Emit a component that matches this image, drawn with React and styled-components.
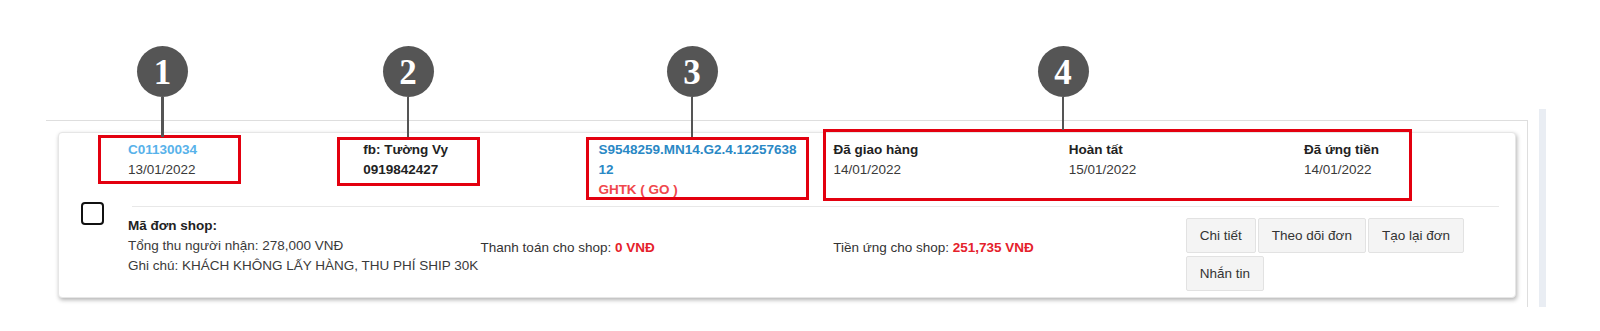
import React from "react";
import styled, { createGlobalStyle } from "styled-components";

const GlobalStyle = createGlobalStyle`
  html, body {
    margin: 0;
    padding: 0;
    background: #fff;
  }
  body {
    font-family: "Liberation Sans", Arial, sans-serif;
    font-size: 13.5px;
    color: #333;
  }
`;

const Page = styled.div`
  position: relative;
  width: 1600px;
  height: 331px;
  display: flex;
  align-items: flex-start;
  padding-left: 46px;
  box-sizing: border-box;
  overflow: hidden;
`;

const Panel = styled.div`
  margin-top: 120px;
  width: 1482px;
  height: 187px;
  box-sizing: border-box;
  border-top: 1px solid #dedede;
  border-right: 1px solid #dedede;
  padding: 11px 11px 0 12px;
`;

const SideStrip = styled.div`
  margin-left: 11px;
  margin-top: 109px;
  width: 7px;
  height: 198px;
  background: #e9edf3;
`;

const Card = styled.div`
  display: flex;
  background: #fff;
  border: 1px solid #e6e6e6;
  border-radius: 4px;
  box-shadow: 1px 2px 4px rgba(0, 0, 0, 0.3);
  height: 166px;
  box-sizing: border-box;
`;

const Gutter = styled.div`
  width: 69px;
  flex-shrink: 0;
  padding: 69px 0 0 22px;
  box-sizing: border-box;
`;

const CheckBox = styled.span`
  display: block;
  width: 23px;
  height: 23px;
  box-sizing: border-box;
  border: 2px solid #111;
  border-radius: 4px;
`;

const Body = styled.div`
  flex: 1;
  padding-right: 16px;
  min-width: 0;
`;

const TopRow = styled.div`
  display: grid;
  grid-template-columns: repeat(5, 235.2px) 1fr;
  padding-top: 7px;
  padding-bottom: 6px;
  line-height: 20px;
`;

const Separator = styled.div`
  height: 1px;
  background: #e8e8e8;
  margin-left: 4px;
`;

const BottomRow = styled.div`
  display: grid;
  grid-template-columns: repeat(3, 352.6px) 1fr;
  padding-top: 9px;
  line-height: 20px;
`;

const Cell = styled.div`
  padding-top: ${(p) => p.$offset || 0}px;
  white-space: nowrap;
`;

const WrapCell = styled.div`
  width: 202px;
  word-break: break-all;
`;

const Code = styled.div`
  font-weight: bold;
  color: ${(p) => p.$color || "#333"};
`;

const Strong = styled.div`
  font-weight: bold;
  color: #222;
`;

const Plain = styled.div`
  color: #3a3a3a;
`;

const Carrier = styled.div`
  font-weight: bold;
  color: #f0474c;
`;

const Amount = styled.span`
  font-weight: bold;
  color: #e5212b;
`;

const Actions = styled.div`
  display: flex;
  flex-wrap: wrap;
  gap: 2.5px 2px;
  padding-top: 2px;
  align-content: flex-start;
`;

const ActionButton = styled.button`
  height: 35px;
  padding: 0 13px;
  background: #f4f4f4;
  border: 1px solid #e2e2e2;
  border-radius: 2px;
  font-family: "Liberation Sans", Arial, sans-serif;
  font-size: 13.5px;
  color: #333;
  cursor: pointer;
`;

const Marker = styled.div`
  position: absolute;
  left: ${(p) => p.$x - 25.5}px;
  top: 46px;
  width: 51px;
  display: flex;
  flex-direction: column;
  align-items: center;
`;

const Bubble = styled.div`
  width: 51px;
  height: 51px;
  border-radius: 50%;
  background: #555;
  color: #fff;
  display: flex;
  align-items: center;
  justify-content: center;
  font-family: "Liberation Serif", "Times New Roman", serif;
  font-weight: bold;
  font-size: 35px;
  line-height: 1;
  padding-top: 1px;
  box-sizing: border-box;
`;

const Stem = styled.div`
  width: 2.5px;
  height: ${(p) => p.$h}px;
  background: #555;
`;

const Highlight = styled.div`
  position: absolute;
  left: ${(p) => p.$x}px;
  top: ${(p) => p.$y}px;
  width: ${(p) => p.$w}px;
  height: ${(p) => p.$h}px;
  border: 3px solid #e3000f;
  box-sizing: border-box;
  pointer-events: none;
`;

const markers = [
  { n: 1, x: 162.5, stem: 40 },
  { n: 2, x: 408, stem: 40 },
  { n: 3, x: 692, stem: 40 },
  { n: 4, x: 1063, stem: 33 },
];

const boxes = [
  { x: 98, y: 135, w: 143, h: 49 },
  { x: 337, y: 137, w: 143, h: 49 },
  { x: 586, y: 137, w: 223, h: 63 },
  { x: 823, y: 129, w: 589, h: 72 },
];

const statuses = [
  { label: "Đã giao hàng", date: "14/01/2022" },
  { label: "Hoàn tất", date: "15/01/2022" },
  { label: "Đã ứng tiền", date: "14/01/2022" },
];

export default function App() {
  return (
    <Page>
      <GlobalStyle />
      <Panel>
        <Card>
          <Gutter>
            <CheckBox />
          </Gutter>
          <Body>
            <TopRow>
              <Cell>
                <Code $color="#58b2ea">C01130034</Code>
                <Plain>13/01/2022</Plain>
              </Cell>
              <Cell>
                <Strong>fb: Tường Vy</Strong>
                <Strong>0919842427</Strong>
              </Cell>
              <WrapCell>
                <Code $color="#2a88c5">S9548259.MN14.G2.4.1225763812</Code>
                <Carrier>GHTK ( GO )</Carrier>
              </WrapCell>
              {statuses.map((s) => (
                <Cell key={s.label}>
                  <Strong>{s.label}</Strong>
                  <Plain>{s.date}</Plain>
                </Cell>
              ))}
            </TopRow>
            <Separator />
            <BottomRow>
              <Cell>
                <Strong>Mã đơn shop:</Strong>
                <Plain>Tổng thu người nhận: 278,000 VNĐ</Plain>
                <Plain>Ghi chú: KHÁCH KHÔNG LẤY HÀNG, THU PHÍ SHIP 30K</Plain>
              </Cell>
              <Cell $offset={22}>
                Thanh toán cho shop: <Amount>0 VNĐ</Amount>
              </Cell>
              <Cell $offset={22}>
                Tiền ứng cho shop: <Amount>251,735 VNĐ</Amount>
              </Cell>
              <Actions>
                <ActionButton>Chi tiết</ActionButton>
                <ActionButton>Theo dõi đơn</ActionButton>
                <ActionButton>Tạo lại đơn</ActionButton>
                <ActionButton>Nhắn tin</ActionButton>
              </Actions>
            </BottomRow>
          </Body>
        </Card>
      </Panel>
      <SideStrip />
      {boxes.map((b, i) => (
        <Highlight key={i} $x={b.x} $y={b.y} $w={b.w} $h={b.h} />
      ))}
      {markers.map((m) => (
        <Marker key={m.n} $x={m.x}>
          <Bubble>{m.n}</Bubble>
          <Stem $h={m.stem} />
        </Marker>
      ))}
    </Page>
  );
}
